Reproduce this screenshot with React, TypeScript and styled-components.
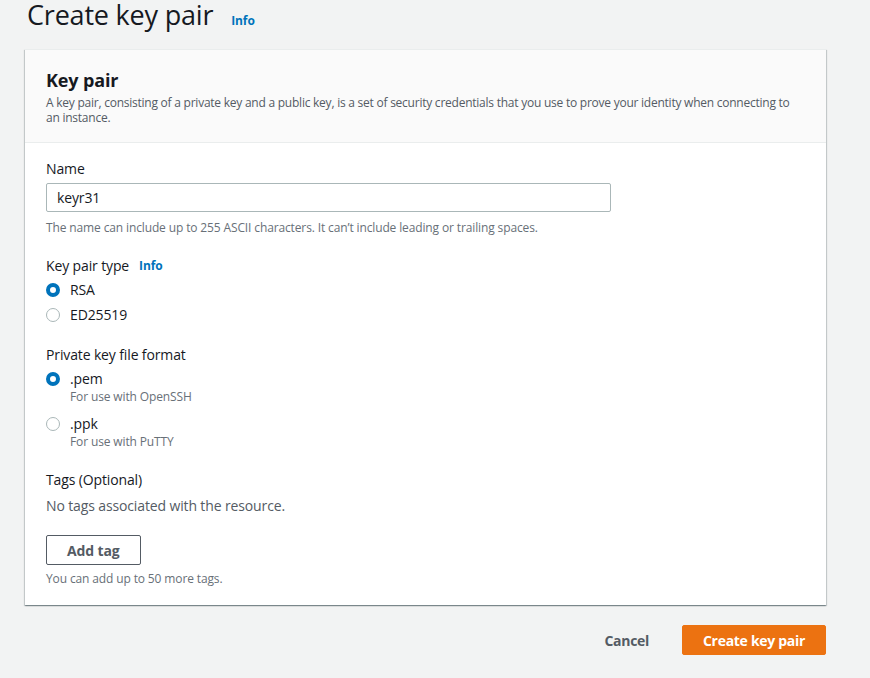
import React, { useState } from 'react';
import styled, { createGlobalStyle } from 'styled-components';

const GlobalStyle = createGlobalStyle`
  html, body {
    margin: 0;
    padding: 0;
    background: #f2f3f3;
  }
  body {
    font-family: "Open Sans", "Noto Sans", Arial, sans-serif;
    color: #16191f;
    letter-spacing: -0.13px;
    -webkit-font-smoothing: antialiased;
  }
  button, input {
    letter-spacing: inherit;
  }
`;

const Page = styled.div`
  width: 870px;
  height: 678px;
  overflow: hidden;
  padding: 0 44px 0 25px;
  box-sizing: border-box;
`;

const TitleRow = styled.div`
  display: flex;
  align-items: baseline;
  gap: 18px;
  height: 58px;
  margin-top: -9px;
  padding-left: 2px;
`;

const Title = styled.h1`
  margin: 0;
  font-size: 27px;
  font-weight: 400;
  letter-spacing: -0.2px;
  line-height: 48px;
  color: #16191f;
`;

const InfoLink = styled.a`
  font-size: 12px;
  font-weight: 700;
  color: #0073bb;
  text-decoration: none;
  cursor: pointer;
`;

const Card = styled.section`
  background: #fff;
  box-shadow: 0 1px 1px 0 rgba(0, 28, 36, 0.3), 1px 1px 1px 0 rgba(0, 28, 36, 0.15), -1px 1px 1px 0 rgba(0, 28, 36, 0.15);
  border-top: 1px solid #eaeded;
`;

const CardHeader = styled.header`
  background: #fafafa;
  border-bottom: 1px solid #eaeded;
  padding: 18px 20px 17px 21px;
`;

const CardTitle = styled.h2`
  margin: 0;
  font-size: 18px;
  font-weight: 700;
  line-height: 24px;
  color: #16191f;
`;

const CardDesc = styled.p`
  margin: 3px 0 0;
  font-size: 12px;
  line-height: 15px;
  letter-spacing: -0.24px;
  color: #545b64;
`;

const CardBody = styled.div`
  padding: 16px 21px 18px;
  display: flex;
  flex-direction: column;
  gap: 20px;
`;

const Field = styled.div`
  display: flex;
  flex-direction: column;
`;

const LabelRow = styled.div`
  display: flex;
  align-items: center;
  gap: 10px;
  font-size: 14px;
  line-height: 20px;
  color: #16191f;
  margin-bottom: 4px;
`;

const TextInput = styled.input`
  width: 565px;
  height: 29px;
  box-sizing: border-box;
  border: 1px solid #aab7b8;
  border-radius: 2px;
  padding: 0 10px;
  font-family: inherit;
  font-size: 14px;
  color: #16191f;
  outline: none;
`;

const Hint = styled.div<{ $gap?: number }>`
  margin-top: ${p => p.$gap ?? 8}px;
  font-size: 12px;
  line-height: 16px;
  color: #687078;
`;

const RadioGroup = styled.div<{ $gap: number }>`
  display: flex;
  flex-direction: column;
  gap: ${p => p.$gap}px;
`;

const RadioRow = styled.label`
  display: flex;
  align-items: flex-start;
  gap: 10px;
  cursor: pointer;
`;

const RadioCircle = styled.span<{ $checked: boolean }>`
  flex: none;
  width: 14px;
  height: 14px;
  margin-top: 3px;
  box-sizing: border-box;
  border-radius: 50%;
  border: ${p => (p.$checked ? '4px solid #0073bb' : '1px solid #aab7b8')};
  background: #fff;
`;

const RadioText = styled.div`
  display: flex;
  flex-direction: column;
`;

const RadioLabel = styled.span`
  font-size: 14px;
  line-height: 20px;
  color: #16191f;
`;

const RadioDesc = styled.span`
  font-size: 12px;
  line-height: 16px;
  color: #687078;
`;

const Empty = styled.div`
  font-size: 14px;
  line-height: 20px;
  color: #545b64;
  margin-top: 2px;
`;

const OutlineButton = styled.button`
  align-self: flex-start;
  margin-top: 19px;
  height: 30px;
  padding: 0 20px;
  background: #fff;
  border: 1px solid #545b64;
  border-radius: 2px;
  font-family: inherit;
  font-size: 14px;
  font-weight: 700;
  color: #545b64;
  cursor: pointer;
`;

const Footer = styled.div`
  display: flex;
  justify-content: flex-end;
  align-items: center;
  gap: 33px;
  margin-top: 20px;
`;

const LinkButton = styled.button`
  background: none;
  border: none;
  padding: 0;
  font-family: inherit;
  font-size: 14px;
  font-weight: 700;
  letter-spacing: -0.3px;
  color: #545b64;
  cursor: pointer;
`;

const PrimaryButton = styled.button`
  height: 30px;
  padding: 0 20px;
  background: #ec7211;
  border: 1px solid #ec7211;
  border-radius: 2px;
  font-family: inherit;
  font-size: 14px;
  font-weight: 700;
  letter-spacing: -0.3px;
  color: #fff;
  cursor: pointer;
`;

type Option = { value: string; label: string; desc?: string };

const Radios: React.FC<{ options: Option[]; value: string; onChange: (v: string) => void }> = ({
  options,
  value,
  onChange,
}) => (
  <RadioGroup $gap={options.some(o => o.desc) ? 9 : 5}>
    {options.map(o => (
      <RadioRow key={o.value} onClick={() => onChange(o.value)}>
        <RadioCircle $checked={value === o.value} />
        <RadioText>
          <RadioLabel>{o.label}</RadioLabel>
          {o.desc && <RadioDesc>{o.desc}</RadioDesc>}
        </RadioText>
      </RadioRow>
    ))}
  </RadioGroup>
);

export default function App() {
  const [name, setName] = useState('keyr31');
  const [type, setType] = useState('rsa');
  const [format, setFormat] = useState('pem');

  return (
    <>
      <GlobalStyle />
      <Page>
        <TitleRow>
          <Title>Create key pair</Title>
          <InfoLink>Info</InfoLink>
        </TitleRow>

        <Card>
          <CardHeader>
            <CardTitle>Key pair</CardTitle>
            <CardDesc>
              A key pair, consisting of a private key and a public key, is a set of security credentials that you use to
              prove your identity when connecting to an instance.
            </CardDesc>
          </CardHeader>

          <CardBody>
            <Field>
              <LabelRow>Name</LabelRow>
              <TextInput value={name} onChange={e => setName(e.target.value)} />
              <Hint>The name can include up to 255 ASCII characters. It can’t include leading or trailing spaces.</Hint>
            </Field>

            <Field>
              <LabelRow>
                Key pair type <InfoLink>Info</InfoLink>
              </LabelRow>
              <Radios
                value={type}
                onChange={setType}
                options={[
                  { value: 'rsa', label: 'RSA' },
                  { value: 'ed', label: 'ED25519' },
                ]}
              />
            </Field>

            <Field>
              <LabelRow>Private key file format</LabelRow>
              <Radios
                value={format}
                onChange={setFormat}
                options={[
                  { value: 'pem', label: '.pem', desc: 'For use with OpenSSH' },
                  { value: 'ppk', label: '.ppk', desc: 'For use with PuTTY' },
                ]}
              />
            </Field>

            <Field>
              <LabelRow>Tags (Optional)</LabelRow>
              <Empty>No tags associated with the resource.</Empty>
              <OutlineButton>Add tag</OutlineButton>
              <Hint $gap={6}>You can add up to 50 more tags.</Hint>
            </Field>
          </CardBody>
        </Card>

        <Footer>
          <LinkButton>Cancel</LinkButton>
          <PrimaryButton>Create key pair</PrimaryButton>
        </Footer>
      </Page>
    </>
  );
}
